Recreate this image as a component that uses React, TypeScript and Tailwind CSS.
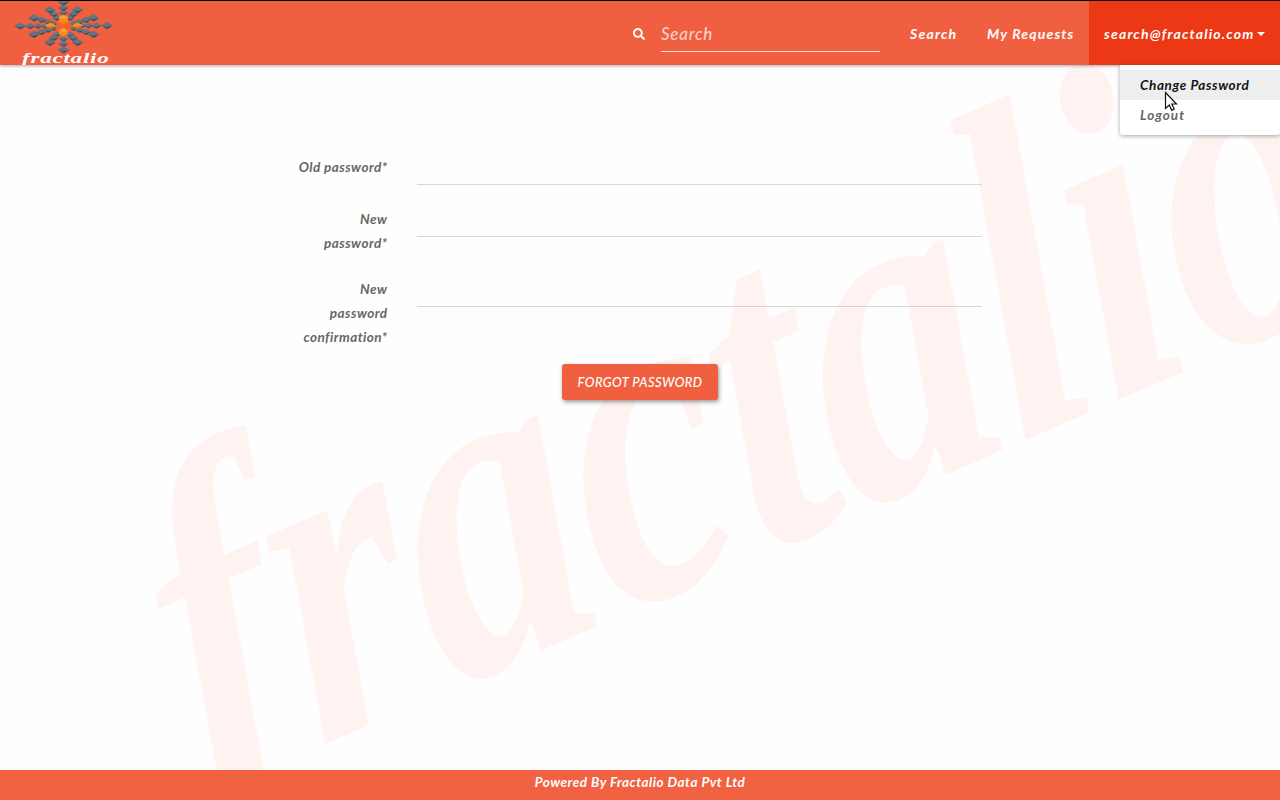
import React from "react";
import { FaSearch } from "react-icons/fa";

const arms: [number, number][][] = [
  [[20, 25.6], [30, 25.6], [38, 25.6], [44.5, 25.6]],
  [[107, 25.2], [96.5, 25.2], [88.5, 25.2], [82.5, 25.2]],
  [[63.5, 1.5], [63.5, 7.5], [63.5, 12.5]],
  [[63.5, 49.5], [63.5, 43.5], [63.5, 38.5]],
  [[34, 17.5], [41.5, 19.5], [48, 21.5], [54, 23]],
  [[93.5, 17.5], [86, 19.5], [79.5, 21.5], [73.5, 23]],
  [[34, 34], [41.5, 31.6], [48, 29.6], [54, 28]],
  [[93.5, 34], [86, 31.6], [79.5, 29.6], [73.5, 28]],
  [[50, 9.5], [53.8, 13.8], [57, 17.6]],
  [[77.5, 9.5], [73.2, 13.8], [70, 17.6]],
  [[50, 42], [53.8, 37.5], [57, 34]],
  [[77.5, 42], [73.2, 37.5], [70, 34]],
];

function Cube({ x, y, w, h, orange }: { x: number; y: number; w: number; h: number; orange?: boolean }) {
  return (
    <g>
      <path d={`M${x - w} ${y}L${x} ${y - h}L${x + w} ${y}L${x} ${y + h}Z`} fill={orange ? "#f7931e" : "#687380"} />
      <path d={`M${x - w} ${y}L${x} ${y + h * 0.45}L${x} ${y + h}Z`} fill={orange ? "#dc7415" : "#4a5362"} />
      <path d={`M${x + w} ${y}L${x} ${y + h * 0.45}L${x} ${y + h}Z`} fill={orange ? "#c9640f" : "#3d4452"} />
    </g>
  );
}

function Logo() {
  return (
    <svg width="130" height="64" viewBox="0 1 130 64" className="block shrink-0" aria-label="fractalio">
      {arms.map((arm, i) =>
        [...arm].reverse().map(([x, y], j) => {
          const k = arm.length - 1 - j;
          return (
            <g key={`${i}-${j}`}>
              <Cube x={x} y={y + 0.3} w={[5.8, 5.2, 4.6, 4][k]} h={[3.7, 3.2, 2.8, 2.5][k]} />
            </g>
          );
        }),
      )}
      <Cube x={50.5} y={25.6} w={6} h={3} orange />
      <Cube x={77.5} y={25.4} w={6} h={3} orange />
      <path d="M59 17L63.5 14.8L68 17V22L63.5 24L59 22Z" fill="#f28a1c" />
      <path d="M59 17L63.5 19L68 17L63.5 14.8Z" fill="#faa233" />
      <path d="M59 30.5L63.5 28.3L68 30.5V34L63.5 36.5L59 34Z" fill="#f28a1c" />
      <path d="M59 30.5L63.5 32.4L68 30.5L63.5 28.3Z" fill="#faa233" />
      <path d="M56 22.5L71 29M71 22.5L56 29" stroke="#f5651f" strokeWidth="1.5" />
      <text x="22" y="63.3" textLength="87.5" lengthAdjust="spacingAndGlyphs" fill="#fff" fontFamily="Liberation Serif, serif" fontStyle="italic" fontWeight="700" fontSize="14">
        fractalio
      </text>
    </svg>
  );
}

function Field({ lines, className }: { lines: string[]; className: string }) {
  return (
    <div className={`flex ${className}`}>
      <label className="w-[107.5px] shrink-0 text-right leading-6">
        {lines.map((line) => (
          <span key={line} className="block whitespace-nowrap">{line}</span>
        ))}
      </label>
      <input type="password" aria-label={lines.join(" ")} className="ml-[29.5px] h-[30px] w-[565px] border-b border-[#666]/25 bg-transparent outline-none" />
    </div>
  );
}

export default function App() {
  return (
    <div className="relative isolate flex h-[800px] w-[1280px] flex-col overflow-hidden bg-[#fefefe] font-['Lato',sans-serif] text-[13.5px] font-bold italic tracking-[0.45px] text-[#666]">
      <svg className="pointer-events-none absolute inset-0 -z-10" width="1280" height="800" aria-hidden="true">
        <text transform="matrix(.698 -.303 .304 .938 208 795)" fontFamily="Liberation Serif, serif" fontWeight="700" fontStyle="italic" fontSize="475" letterSpacing="0" fill="#fff3f1">
          fractalio
        </text>
      </svg>

      <header className="flex h-[65px] shrink-0 border-t border-black bg-[#f06040] text-white shadow-[0_1px_3px_rgba(0,0,0,0.35)]">
        <Logo />
        <div className="ml-auto flex items-center text-[14px]">
          <FaSearch className="mt-0.5 mr-4 size-3" />
          <input placeholder="Search" aria-label="Search" className="mt-px h-[37px] w-[219px] border-b border-white/80 bg-transparent text-[17px] font-medium tracking-[0.7px] outline-none placeholder:text-white/70" />
          <a className="ml-[30px] w-[47px] whitespace-nowrap tracking-[1.2px]">Search</a>
          <a className="ml-[30px] w-[87px] whitespace-nowrap tracking-[1.15px]">My Requests</a>
          <a className="ml-[15px] flex h-full w-[191px] items-center justify-between bg-[#ec3814] px-[15px] whitespace-nowrap tracking-[1.2px]">
            search@fractalio.com
            <span className="mt-0.5 -ml-2 border-x-4 border-t-4 border-x-transparent border-t-white" />
          </a>
        </div>
      </header>

      <div className="absolute top-[65px] right-0 w-40 rounded-b-[3px] bg-white py-[5px] shadow-[0_1px_4px_rgba(0,0,0,0.35)]">
        <div className="flex h-[30px] items-center bg-[#eee] pt-px pl-5 tracking-[0.6px] text-[#141414]">Change Password</div>
        <div className="flex h-[30px] items-center pt-px pl-5 tracking-[1px]">Logout</div>
      </div>
      <svg className="absolute top-[91px] left-[1164px]" width="15" height="22" viewBox="0 0 15 22" aria-hidden="true">
        <path d="M1.5 1.5V17.5L5.3 14L7.8 19.3L10.2 18L7.8 13H12.5Z" fill="#fff" stroke="#111" strokeWidth="1.2" />
      </svg>

      <main className="flex flex-1 flex-col pl-[280px]">
        <Field lines={["Old password*"]} className="mt-[90px] h-[30px]" />
        <Field lines={["New", "password*"]} className="mt-[22px] h-12" />
        <Field lines={["New", "password", "confirmation*"]} className="mt-[22px] h-[72px]" />
        <button className="mt-[15px] ml-[282px] h-9 w-[156px] rounded-[3px] bg-[#f06040] pt-0.5 text-[13px] font-medium tracking-[0.38px] whitespace-nowrap text-white italic shadow-[1px_2px_4px_rgba(0,0,0,0.4)]">
          FORGOT PASSWORD
        </button>
      </main>

      <footer className="flex h-[30px] shrink-0 justify-center bg-[#f06040]/99 pt-0.5 tracking-[0.5px] text-white">
        Powered By Fractalio Data Pvt Ltd
      </footer>
    </div>
  );
}
